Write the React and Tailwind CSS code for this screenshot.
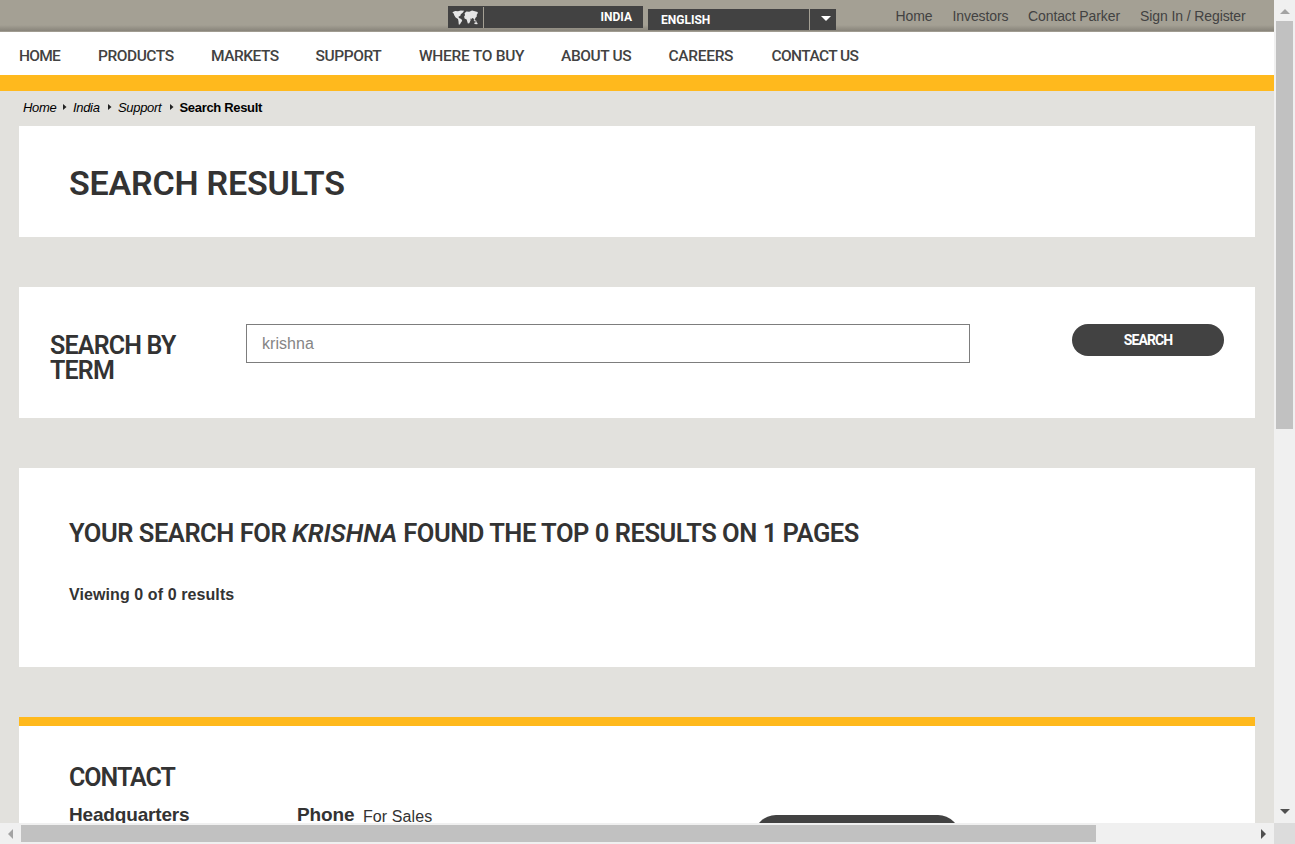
const NAV = [
  ["HOME", "w-[79px] tracking-[-0.75px]"],
  ["PRODUCTS", "w-[113px] tracking-[-0.45px]"],
  ["MARKETS", "w-[104.500px] tracking-[-0.5px]"],
  ["SUPPORT", "w-[103.500px] tracking-[-0.4px]"],
  ["WHERE TO BUY", "w-[142px] tracking-[-0.28px]"],
  ["ABOUT US", "w-[107.500px] tracking-[-0.4px]"],
  ["CAREERS", "w-[103px] tracking-[-0.3px]"],
  ["CONTACT US", "w-[100px] tracking-[-0.6px]"],
];

function WorldMap() {
  return (
    <svg viewBox="0 0 28 16" className="h-[15px] w-[27px]" fill="#e6e6e6">
      <path d="M0 2.5 3 1l3 .3L9 .5l3.500.3-1.500 2L9 4.500 8.500 6 6.500 7.200 7 8.500l2.500 1.200L10.500 11.500 9 13.500l-1 2H6.800L6.500 12 6 9.500 3.500 8 2 5.500 1.500 4z" />
      <path d="M13 3.500 15 1.500 18 1.800l3-1.300 6 1.500v1.500L26 5v2L24.500 8.500l-.5 2.500-1.500-2-1.500-.5-1 1.500-1-1.500.5 2.500-1.500 3-1.500.5-1.300-4.500L13 9l-.5-2 1-1.500z" />
      <path d="m22.500 10.500 3 1 .5 1-2.500-.5zM23.500 13.500l2-.8 1.500 1.300-.5 1.300-3-.3z" />
    </svg>
  );
}

function Crumb({ children, width }) {
  return (
    <span className={"flex items-center italic " + width}>
      <span className="flex-1">{children}</span>
      <svg viewBox="0 0 4 6" className="mr-1.5 mb-0.5 h-1.5 w-1" fill="#222"><path d="M0 0 3.500 3 0 6z" /></svg>
    </span>
  );
}

export default function App() {
  return (
    <div className="flex h-[844px] w-[1295px] flex-col overflow-hidden bg-[#e2e1dd] font-['Liberation_Sans',Arial,sans-serif] text-[#333]">
      <div className="flex min-h-0 flex-1">
        <main className="flex w-[1274px] flex-col overflow-hidden">
          <header className="flex h-8 shrink-0 bg-[linear-gradient(#a4a094_0px,#a4a094_25px,#88847a_31px,#a09c91_31px)] pl-[448px] font-['Roboto',sans-serif] text-[12px] font-bold text-white">
            <div className="mt-1.5 flex h-[22px] w-[195px] bg-[#424242]">
              <div className="flex w-[35px] items-center pl-1"><WorldMap /></div>
              <div className="mt-px flex flex-1 justify-end border-l border-[#a4a094] pr-[11px] leading-5">INDIA</div>
            </div>
            <div className="mt-[9px] ml-[5px] flex h-[21px] w-[188px] bg-[#424242]">
              <div className="w-[161px] pl-[13px] leading-[22px]">ENGLISH</div>
              <div className="flex flex-1 justify-center border-l border-[#a4a094] pt-[7px] pl-[5px]">
                <svg viewBox="0 0 10 5" className="h-[5px] w-2.5" fill="white"><path d="M0 0h10L5 5z" /></svg>
              </div>
            </div>
            <div className="ml-[59.500px] flex pt-[7px] font-['Liberation_Sans',Arial,sans-serif] text-[14px] leading-[18px] font-normal tracking-[-0.1px] whitespace-nowrap text-[#424242]">
              <span className="w-[57px]">Home</span>
              <span className="w-[75.500px]">Investors</span>
              <span className="w-[112px]">Contact Parker</span>
              <span>Sign In / Register</span>
            </div>
          </header>
          <nav className="flex h-[43px] shrink-0 bg-white pl-[19px] font-['Roboto',sans-serif] text-[15.500px] leading-[48px] font-medium whitespace-nowrap text-[#424242]">
            {NAV.map(([label, style]) => <span key={label} className={style}>{label}</span>)}
          </nav>
          <div className="h-4 shrink-0 bg-[#ffb91d]" />
          <div className="flex h-[35px] shrink-0 pl-[23px] text-[13px] leading-[33px] tracking-[-0.32px] text-black">
            <Crumb width="h-[33px] w-[50px]">Home</Crumb>
            <Crumb width="h-[33px] w-[45px]">India</Crumb>
            <Crumb width="h-[33px] w-[61.500px]">Support</Crumb>
            <strong>Search Result</strong>
          </div>
          <section className="mx-[19px] h-[111px] shrink-0 bg-white pt-[37px] pl-[50px]">
            <h1 className="font-['Roboto',sans-serif] text-[34px] leading-10 font-semibold tracking-[-0.2px]">SEARCH RESULTS</h1>
          </section>
          <section className="mx-[19px] mt-[50px] flex h-[131px] shrink-0 items-start bg-white pt-[37px] pl-[31px]">
            <h2 className="mt-[9px] w-[196px] font-['Roboto',sans-serif] text-[25px] leading-[25px] font-semibold tracking-[-0.8px]">SEARCH BY<br />TERM</h2>
            <div className="h-[39px] w-[724px] border border-[#7d7d7d] pl-[15px] text-[16px] leading-[37px] tracking-[0.05px] text-[#858585]">krishna</div>
            <button className="ml-[102px] h-8 w-[152px] rounded-full bg-[#424242] font-['Roboto',sans-serif] text-[14px] font-bold tracking-[-0.9px] text-white">SEARCH</button>
          </section>
          <section className="mx-[19px] mt-[50px] h-[199px] shrink-0 bg-white pt-[50px] pl-[50px]">
            <h2 className="font-['Roboto',sans-serif] text-[25.500px] leading-[30px] font-semibold tracking-[-0.47px] whitespace-nowrap">YOUR SEARCH FOR <em className="tracking-normal">KRISHNA</em> FOUND THE TOP 0 RESULTS ON 1 PAGES</h2>
            <p className="mt-[37px] text-[16px] leading-5 font-bold tracking-[0.09px]">Viewing 0 of 0 results</p>
          </section>
          <section className="mx-[19px] mt-[50px] h-[200px] shrink-0 border-t-[9px] border-[#ffb91d] bg-white pt-9 pl-[50px]">
            <h2 className="font-['Roboto',sans-serif] text-[25px] leading-[31px] font-semibold tracking-[-1px]">CONTACT</h2>
            <div className="flex items-start pt-2.5 leading-6">
              <strong className="w-[228px] text-[19px] tracking-[-0.17px]">Headquarters</strong>
              <strong className="w-[66px] text-[19px] tracking-[-0.1px]">Phone</strong>
              <span className="w-[391px] pt-0.5 text-[16px] tracking-[0.1px]">For Sales</span>
              <div className="mt-3 h-11 w-[206px] rounded-full bg-[#424242]" />
            </div>
          </section>
        </main>
        <div className="flex w-[21px] flex-col items-center bg-[#f0f0f0]">
          <svg viewBox="0 0 10 5" className="mt-[9px] h-[5px] w-2.5 shrink-0" fill="#a3a3a3"><path d="M5 0 10 5H0z" /></svg>
          <div className="mt-[7px] h-[408px] w-[17px] bg-[#c1c1c1]" />
          <svg viewBox="0 0 10 5" className="mt-auto mb-[9px] h-[5px] w-2.5 shrink-0" fill="#505050"><path d="M0 0h10L5 5z" /></svg>
        </div>
      </div>
      <div className="flex h-[21px] shrink-0 items-center bg-[#f0f0f0]">
        <svg viewBox="0 0 5 10" className="ml-2 h-2.5 w-[5px]" fill="#a3a3a3"><path d="M5 0v10L0 5z" /></svg>
        <div className="ml-2 h-[17px] w-[1075px] bg-[#c1c1c1]" />
        <svg viewBox="0 0 5 10" className="mr-2 ml-auto h-2.5 w-[5px]" fill="#505050"><path d="M0 0v10l5-5z" /></svg>
        <div className="h-[21px] w-[21px] bg-[#dcdcdc]" />
      </div>
    </div>
  );
}
